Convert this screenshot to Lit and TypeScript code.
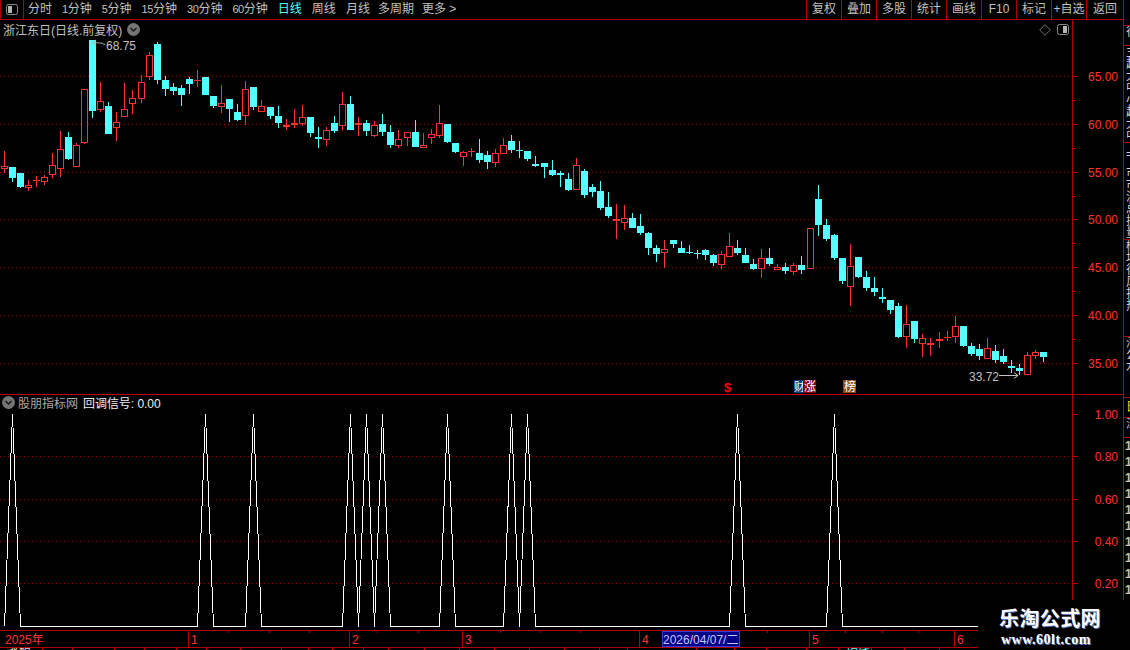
import { LitElement, html, svg, css } from 'lit';
import { customElement } from 'lit/decorators.js';

// x, wick top, body top, body bottom, wick bottom, up (1 = red hollow, 0 = cyan solid)
type Candle = [number, number, number, number, number, number];

const CANDLES: Candle[] = [
  [4,151,166,169,173,1],[12,167,167,178,182,0],[20,173,173,187,188,0],[28,180,185,188,191,1],
  [36,176,180,181,187,1],[44,175,177,182,185,1],[52,153,165,175,178,1],[60,131,149,169,177,1],
  [68,132,137,159,160,0],[76,143,145,167,167,1],[84,89,89,143,144,1],[92,40,40,111,118,0],
  [100,82,101,110,112,1],[108,102,106,134,134,0],[116,112,122,128,141,1],[124,83,109,117,117,1],
  [132,90,98,104,114,1],[141,75,82,99,103,1],[149,52,55,77,80,1],[157,42,44,80,84,0],
  [165,76,80,89,96,0],[173,83,87,91,95,0],[181,85,88,95,106,0],[189,77,79,84,94,0],
  [197,70,80,81,87,1],[205,77,77,95,95,0],[213,96,96,106,108,0],[221,85,103,107,113,1],
  [229,99,99,109,122,0],[237,104,112,120,121,0],[245,81,89,116,125,1],[253,87,87,107,110,0],
  [261,100,106,112,112,1],[270,107,107,116,119,0],[278,106,116,123,128,0],[286,119,125,127,130,1],
  [294,109,123,125,128,1],[302,105,117,124,126,1],[310,117,117,133,137,0],[318,127,137,139,148,0],
  [326,127,130,140,146,1],[334,116,123,131,133,0],[342,92,104,126,130,1],[350,96,104,130,130,0],
  [358,117,123,125,136,1],[366,120,123,131,136,0],[374,121,125,136,137,1],[382,114,124,132,136,0],
  [390,125,132,145,148,0],[398,130,139,146,148,1],[407,132,132,138,146,1],[415,120,132,147,147,0],
  [423,133,145,148,148,1],[431,129,134,138,144,1],[439,105,123,136,138,1],[447,124,124,142,143,0],
  [455,143,143,152,153,0],[463,151,152,157,166,1],[471,148,151,152,157,1],[479,139,153,160,163,0],
  [487,151,155,162,169,0],[495,149,153,163,167,1],[503,138,145,154,154,1],[511,135,141,150,153,0],
  [519,141,150,151,158,0],[527,151,151,159,161,0],[535,156,164,166,167,0],[544,163,163,167,178,0],
  [552,160,170,175,176,0],[560,171,173,175,187,0],[568,173,179,190,191,0],[576,158,165,190,190,1],
  [584,169,171,195,198,0],[592,184,187,192,197,0],[600,181,191,208,210,0],[608,192,207,216,218,0],
  [616,204,219,221,239,1],[624,205,218,223,230,1],[632,213,218,228,228,0],[640,214,226,233,235,0],
  [648,232,233,248,255,0],[656,245,248,254,262,0],[664,240,249,253,268,1],[673,240,240,244,248,0],
  [681,241,248,253,253,0],[689,245,252,253,254,0],[697,250,253,254,259,0],[705,249,250,255,260,0],
  [713,254,255,263,266,0],[721,251,254,265,269,1],[729,233,246,257,257,1],[737,240,248,253,255,0],
  [745,248,255,263,263,0],[753,259,264,269,270,0],[761,249,258,269,278,1],[769,248,258,264,266,0],
  [777,264,267,270,270,1],[785,263,267,271,274,0],[793,263,265,272,275,1],[801,256,265,270,274,0],
  [810,228,228,269,269,1],[818,185,199,225,236,0],[826,219,225,239,241,0],[834,234,235,258,260,0],
  [842,258,258,281,284,0],[850,244,266,287,306,1],[858,257,257,277,278,0],[866,271,277,288,291,0],
  [874,277,288,292,296,0],[882,288,297,299,303,0],[890,300,300,310,314,0],[898,303,306,337,338,0],
  [906,305,324,337,348,1],[914,321,321,339,343,0],[922,334,338,344,357,1],[930,338,343,345,356,1],
  [939,332,339,341,348,1],[947,331,337,338,341,1],[955,316,326,337,343,1],[963,326,326,346,347,0],
  [971,343,346,354,356,0],[979,344,349,356,360,0],[987,338,348,359,359,1],[995,345,351,360,363,0],
  [1003,349,356,362,364,0],[1011,360,366,368,373,0],[1019,364,368,371,375,0],[1027,352,355,375,375,1],
  [1035,350,352,356,359,1],[1043,352,352,357,362,0],
];

const SIGNALS = new Set([12, 205, 253, 350, 366, 382, 447, 511, 527, 737, 834]);

const PRICE_TICKS: [number, string][] = [
  [76, '65.00'], [124, '60.00'], [172, '55.00'], [219, '50.00'], [267, '45.00'], [315, '40.00'], [363, '35.00'],
];
const MINOR_TICKS = [100, 148, 196, 243, 291, 339];
const SIGNAL_TICKS: [number, string][] = [[414, '1.00'], [456, '0.80'], [499, '0.60'], [541, '0.40'], [583, '0.20']];

const PERIODS: [string, string][] = [
  ['', '分时'], ['1', '分钟'], ['5', '分钟'], ['15', '分钟'], ['30', '分钟'], ['60', '分钟'],
  ['', '日线'], ['', '周线'], ['', '月线'], ['', '多周期'], ['', '更多 >'],
];
const ACTIONS = ['复权', '叠加', '多股', '统计', '画线', 'F10', '标记', '+自选', '返回'];

const MONTHS: [number, string][] = [[188, '1'], [349, '2'], [462, '3'], [639, '4'], [809, '5'], [954, '6']];
const MINOR_DATES = [228, 269, 309, 377, 418, 500, 540, 580, 680, 767, 845, 882, 918];

const STRIP: [number, string, string][] = [
  [20, '行情', ''],
  [97, '主力净流入\n超大单买入\n大单买入流\n中单买入量\n小单买入量\n超大单卖出\n大单卖出量\n中单卖出', ''],
  [97, '上涨家数比\n下跌家数比\n市盈率动态\n市净率最新\n流通市值亿\n总市值亿元\n换手率实时\n量比当前值', ''],
  [97, '概念板块名\n地域板块名\n行业板块名\n风格板块名\n指数板块名\n热点题材名\n', ''],
  [61, '海运物流\n公用事业\n水务环保\n', ''],
  [20, '日', 'hl'],
  [20, '深', ''],
  [163, '1\n1\n1\n1\n1\n1\n1\n1\n1\n1', 'num'],
];

const TAIL_CELLS: [number, string, string][] = [
  [43, '涨幅', ''], [30, '', ''], [42, '', ''], [30, '', ''], [32, '', ''], [30, '', ''], [34, '', ''], [41, '', ''],
  [27, '', ''], [24, '', ''], [31, '', ''], [25, '', ''], [36, '', ''], [35, '', ''], [35, '', ''], [35, '', ''],
  [35, '', ''], [35, '', ''], [28, '', ''], [69, '', ''], [38, '', ''], [32, '', ''], [40, '', ''], [32, '', ''],
  [33, '均线', 'cy'], [33, '', ''], [35, '', ''],
];

@customElement('app-root')
export class AppRoot extends LitElement {
  static styles = css`
    :host {
      display: block;
      width: 1130px;
      height: 650px;
      overflow: hidden;
      background: #000;
      color: #c0c0c0;
      font: 12px 'Liberation Sans', 'Noto Sans CJK SC', sans-serif;
    }
    .frame {
      position: relative;
      display: flex;
      flex-direction: column;
      height: 650px;
    }
    .toolbar {
      display: flex;
      align-items: center;
      width: 1123px;
      height: 19px;
      box-sizing: content-box;
      border-right: 1px solid #b00000;
      border-bottom: 1px solid #b00000;
      line-height: 19px;
    }
    .layout-btn {
      display: flex;
      align-items: center;
      justify-content: center;
      width: 24px;
      height: 19px;
      box-sizing: border-box;
      padding-right: 1px;
      border-left: 1px solid #b00000;
      border-right: 1px solid #b00000;
    }
    .periods {
      display: flex;
      gap: 10px;
      margin-left: 4px;
    }
    .periods .n { font-size: 11px; letter-spacing: -0.4px; }
    .periods .on { color: #54ffff; }
    .periods .tight { margin-left: -2px; }
    .actions {
      display: flex;
      margin-left: auto;
    }
    .actions div {
      width: 34px;
      border-left: 1px solid #b00000;
      text-align: center;
      white-space: nowrap;
    }
    .actions div:last-child { width: 36px; }
    .body {
      display: flex;
      height: 630px;
    }
    .main {
      width: 1123px;
      display: flex;
      flex-direction: column;
    }
    .pane {
      position: relative;
      flex: none;
    }
    .pane svg, .axis svg { display: block; }
    .price { height: 374px; border-bottom: 1px solid #c00000; }
    .signal { height: 235px; }
    .pane-title {
      position: absolute;
      left: 3px;
      top: 2px;
      display: flex;
      align-items: center;
      height: 15px;
      white-space: nowrap;
    }
    .signal .pane-title { top: 0; left: 2px; }
    .pane-title .source { margin: 0 5px 0 3px; color: #a8a8a8; }
    .pane-title .name { color: #f0f0f0; letter-spacing: -0.05px; }
    .pane-title .arrow { margin-left: 5px; }
    .pane-tools {
      position: absolute;
      right: 54px;
      top: 4px;
      display: flex;
      gap: 6px;
    }
    .axis {
      height: 16px;
      border-top: 1px solid #b00000;
      border-bottom: 1px solid #b00000;
      box-sizing: content-box;
      flex: none;
    }
    .tail {
      display: flex;
      height: 3px;
      overflow: hidden;
      line-height: 10px;
    }
    .tail div {
      flex: none;
      box-sizing: border-box;
      border-right: 1px solid #b00000;
      padding-left: 7px;
      color: #e0e0e0;
    }
    .tail .cy { color: #54ffff; }
    .strip {
      width: 7px;
      box-sizing: border-box;
      border-left: 1px solid #b00000;
      padding-top: 5px;
      overflow: hidden;
    }
    .strip-row {
      box-sizing: border-box;
      border-top: 1px solid #b00000;
      padding-left: 2px;
      overflow: hidden;
      white-space: pre;
      line-height: 12px;
      color: #d0d0d0;
    }
    .strip-row.hl { color: #e6e600; line-height: 18px; }
    .strip-row.num { line-height: 16px; font-weight: 700; padding-left: 1px; color: #c0c0c0; }
    .mark {
      position: absolute;
      left: 978px;
      top: 600px;
      width: 152px;
      height: 50px;
      background: #000;
      box-sizing: border-box;
      padding: 6px 0 0 21px;
      color: #fff;
      font-weight: 700;
      white-space: nowrap;
    }
    .mark .cn {
      font: 700 20px/24px 'Noto Sans CJK SC', sans-serif;
      letter-spacing: 0.4px;
      text-shadow: 1px 1px 0 #5878c0;
    }
    .mark .url {
      font: 700 14px/20px 'Liberation Serif', serif;
      padding-left: 2px;
      text-shadow: 1px 1px 0 #5878c0;
      letter-spacing: 0.5px;
    }
  `;

  private chevronIcon() {
    return html`<svg width="13" height="13" viewBox="0 0 13 13">
      <circle cx="6.5" cy="6.5" r="6.5" fill="#747474"></circle>
      <path d="M3.5 5l3 3 3-3" fill="none" stroke="#161616" stroke-width="1.4"></path>
    </svg>`;
  }

  private panelIcon(side: 'left' | 'right') {
    return html`<svg width="12" height="11" viewBox="0 0 12 11">
      <rect x="0.5" y="0.5" width="11" height="10" rx="2" fill="none" stroke="#8c8c8c"></rect>
      <rect x="${side === 'left' ? 2 : 6}" y="2" width="4" height="7" fill="#b4b4b4"></rect>
    </svg>`;
  }

  private candle([x, wt, bt, bb, wb, up]: Candle) {
    const color = up ? '#ff3232' : '#54ffff';
    const h = bb - bt;
    // thin bodies are a single filled stroke, red ones are hollow above that
    const body = up && h > 2
      ? svg`<rect x="${x - 2.5}" y="${bt + 0.5}" width="6" height="${h - 1}" fill="#000" stroke="${color}"></rect>`
      : svg`<rect x="${x - 3}" y="${bt}" width="7" height="${h}" fill="${color}"></rect>`;
    return svg`
      <rect x="${x}" y="${wt}" width="1" height="${wb - wt}" fill="${color}"></rect>
      ${body}`;
  }

  private yAxis(x: number, top: number, bottom: number) {
    return svg`<rect x="${x}" y="${top}" width="1" height="${bottom - top}" fill="#b00000"></rect>`;
  }

  private tick(y: number, len: number) {
    return svg`<rect x="1073" y="${y}" width="${len}" height="1" fill="#b00000"></rect>`;
  }

  private dots(y: number) {
    return svg`<line x1="0" x2="1072" y1="${y + 0.5}" y2="${y + 0.5}" stroke="#a00000" stroke-dasharray="1 3" shape-rendering="auto"></line>`;
  }

  private label(y: number, text: string) {
    return svg`<text x="1118" y="${y + 5}" text-anchor="end" fill="#ff3232" font-size="12">${text}</text>`;
  }

  private priceChart() {
    return html`<svg width="1123" height="374" viewBox="0 20 1123 374" shape-rendering="crispEdges">
      ${PRICE_TICKS.map(([y]) => this.dots(y))}
      ${CANDLES.map((c) => this.candle(c))}
      ${this.yAxis(1072, 20, 394)}
      ${PRICE_TICKS.map(([y]) => this.tick(y, 5))}
      ${MINOR_TICKS.map((y) => this.tick(y, 3))}
      ${PRICE_TICKS.map(([y, t]) => this.label(y, t))}
      <g shape-rendering="auto">
        <text x="106" y="50" fill="#c0c0c0" font-size="12">68.75</text>
        <path d="M105 44.5c-2 0-2-1.5-4-1.5s-3 0-8.5-.5M96 40l-3.500 2.500 3.500 2.500" fill="none" stroke="#b4b4b4"></path>
        <text x="969" y="381" fill="#c0c0c0" font-size="12">33.72</text>
        <path d="M999 375.500h19M1014 372.500l4 3-4 3" fill="none" stroke="#c0c0c0"></path>
        <text x="724" y="392" fill="#ff0000" font-size="13" font-weight="700">$</text>
      </g>
      <rect x="794" y="380" width="12" height="13" fill="#0c3c78"></rect>
      <text x="794" y="391" fill="#fff" font-size="11" font-family="Noto Sans CJK SC" shape-rendering="auto">财</text>
      <rect x="803" y="380" width="13" height="13" fill="#800010"></rect>
      <text x="804" y="391" fill="#fff" font-size="12" font-family="Noto Sans CJK SC" shape-rendering="auto">涨</text>
      <rect x="843" y="380" width="13" height="13" fill="#8a4c10"></rect>
      <text x="844" y="391" fill="#fff" font-size="12" font-family="Noto Sans CJK SC" shape-rendering="auto">榜</text>
    </svg>`;
  }

  private signalChart() {
    const line = CANDLES.map(([x]) => `${x + 0.5},${SIGNALS.has(x) ? 414 : 626.5}`).join(' ');
    return html`<svg width="1123" height="235" viewBox="0 395 1123 235" shape-rendering="crispEdges">
      ${SIGNAL_TICKS.slice(1).map(([y]) => this.dots(y))}
      <polyline points="${line}" fill="none" stroke="#fff"></polyline>
      ${this.yAxis(1072, 395, 630)}
      ${SIGNAL_TICKS.map(([y]) => this.tick(y, 5))}
      ${SIGNAL_TICKS.map(([y, t]) => this.label(y, t))}
    </svg>`;
  }

  private dateAxis() {
    return html`<svg width="1123" height="16" viewBox="0 631 1123 16">
      <text x="5" y="644" fill="#ff3232" font-size="12">2025<tspan font-family="Noto Sans CJK SC">年</tspan></text>
      ${MONTHS.map(([x, t]) => svg`
        <rect x="${x}" y="631" width="1" height="16" fill="#b00000"></rect>
        <text x="${x + 3}" y="644" fill="#ff3232" font-size="12">${t}</text>`)}
      ${MINOR_DATES.map((x) => svg`<rect x="${x}" y="631" width="1" height="2" fill="#b00000"></rect>`)}
      <rect x="662.500" y="631.500" width="77" height="15" fill="#000088" stroke="#3c3cd0"></rect>
      <text x="663" y="644" fill="#c8c8ff" font-size="12">2026/04/07/<tspan font-family="Noto Sans CJK SC">二</tspan></text>
    </svg>`;
  }

  render() {
    return html`
      <div class="frame">
        <div class="toolbar">
          <div class="layout-btn">${this.panelIcon('left')}</div>
          <div class="periods">
            ${PERIODS.map(([n, t], i) => html`<span class="${t === '日线' ? 'on' : ''} ${i > 8 ? 'tight' : ''}"><span class="n">${n}</span>${t}</span>`)}
          </div>
          <div class="actions">${ACTIONS.map((a) => html`<div>${a}</div>`)}</div>
        </div>
        <div class="body">
          <div class="main">
            <div class="pane price">
              ${this.priceChart()}
              <div class="pane-title">浙江东日(日线.前复权)<span class="arrow">${this.chevronIcon()}</span></div>
              <div class="pane-tools">
                <svg width="12" height="12" viewBox="0 0 12 12"><path d="M6 .7L11.300 6 6 11.300.7 6z" fill="none" stroke="#707070"></path></svg>
                ${this.panelIcon('right')}
              </div>
            </div>
            <div class="pane signal">
              ${this.signalChart()}
              <div class="pane-title">
                ${this.chevronIcon()}<span class="source">股朋指标网</span><span class="name">回调信号: 0.00</span>
              </div>
            </div>
            <div class="axis">${this.dateAxis()}</div>
            <div class="tail">
              ${TAIL_CELLS.map(([w, t, c]) => html`<div class="${c}" style="width:${w}px">${t}</div>`)}
            </div>
          </div>
          <div class="strip">
            ${STRIP.map(([h, t, c]) => html`<div class="strip-row ${c}" style="height:${h}px">${t}</div>`)}
          </div>
        </div>
        <div class="mark">
          <div class="cn">乐淘公式网</div>
          <div class="url">www.60lt.com</div>
        </div>
      </div>
    `;
  }
}
